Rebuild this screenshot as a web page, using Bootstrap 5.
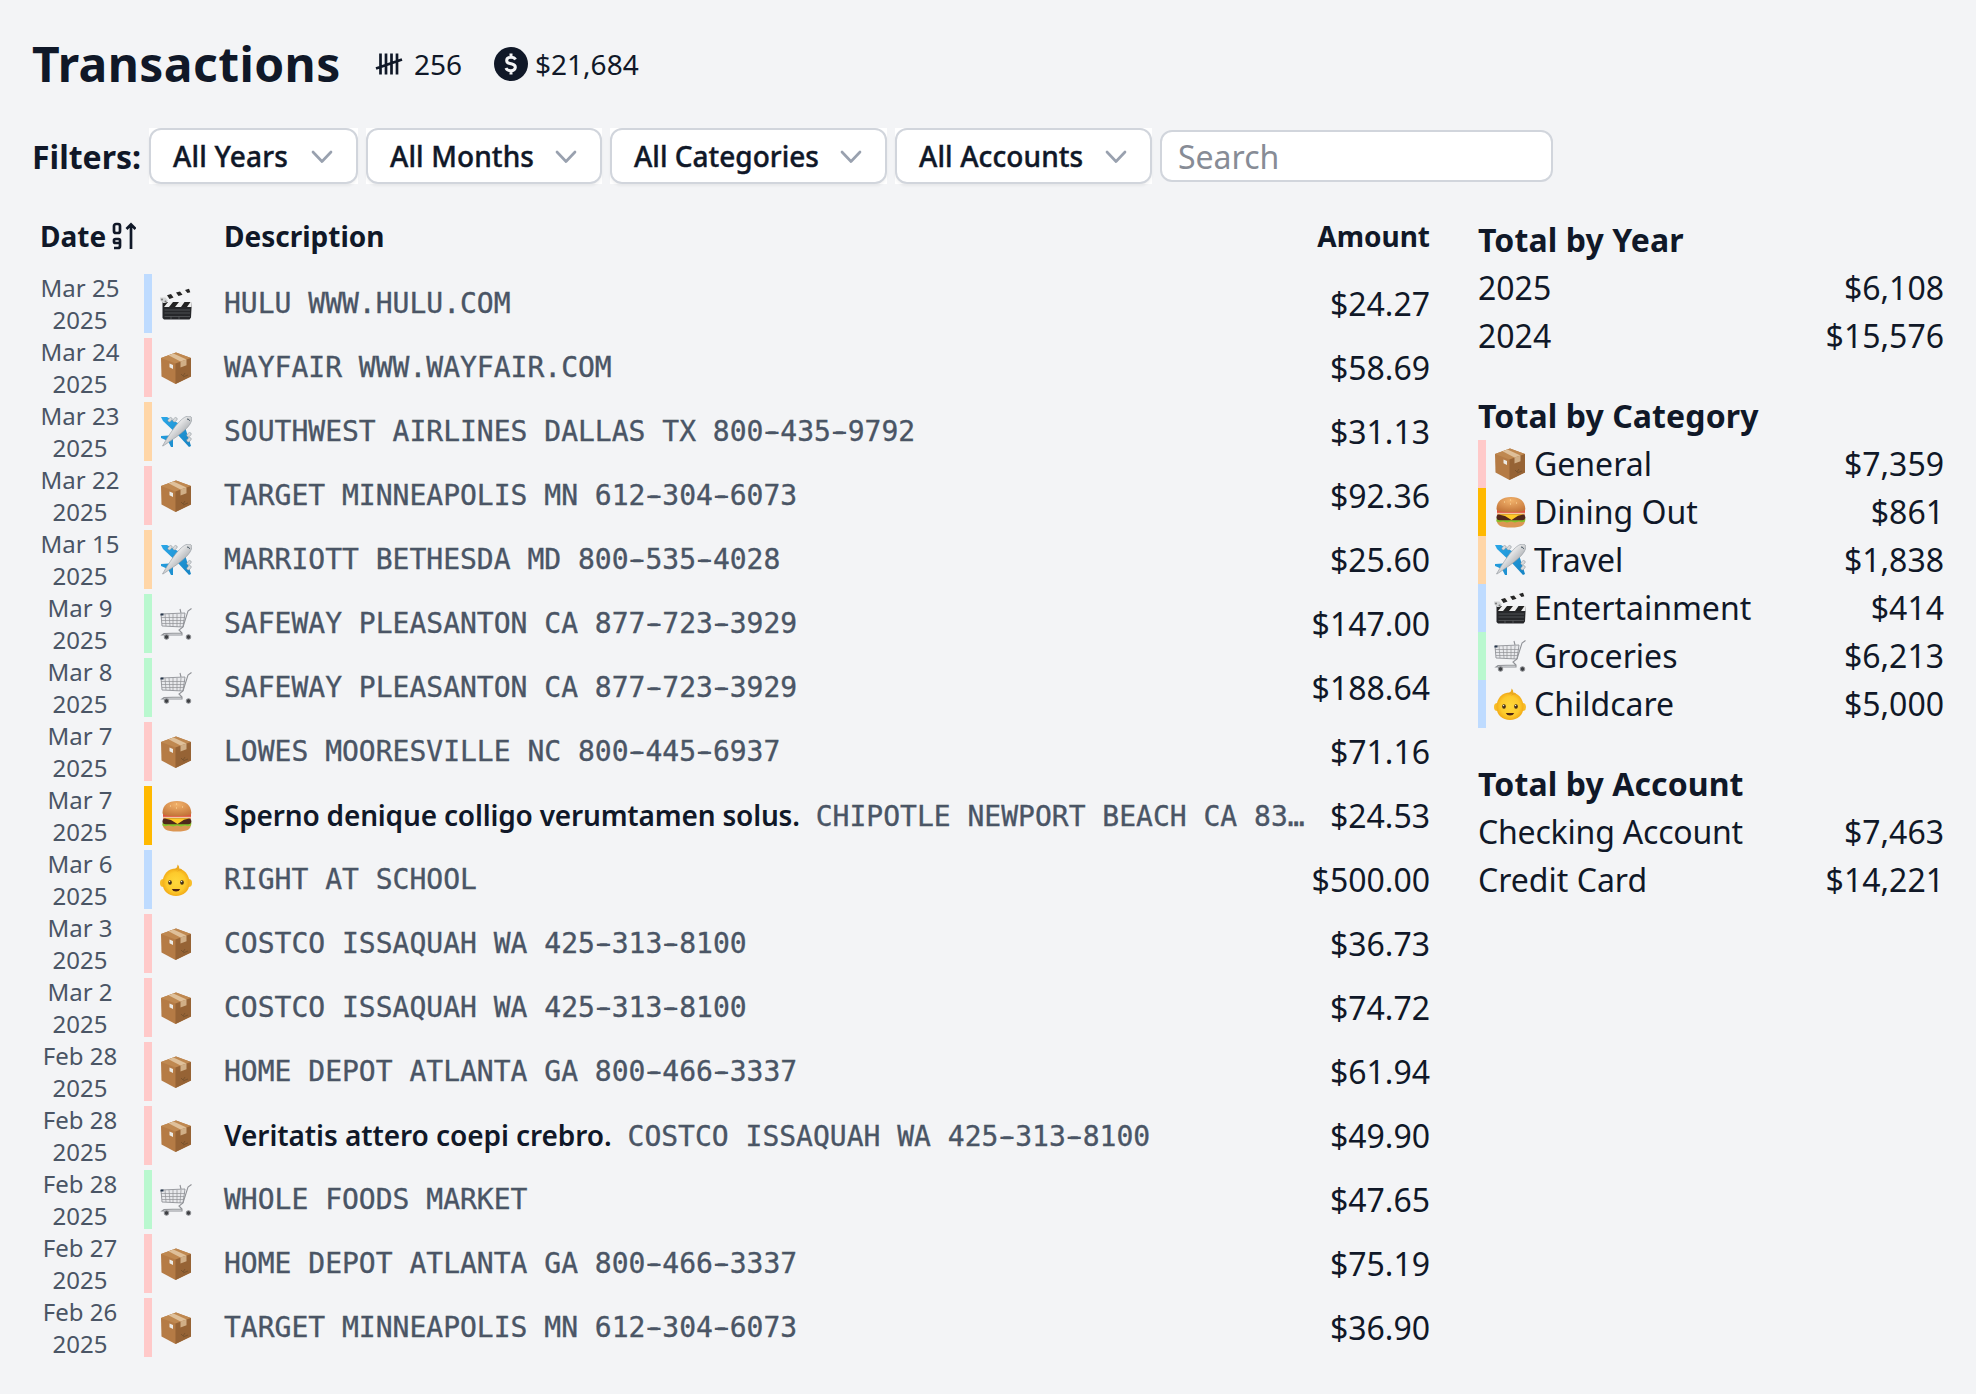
<!DOCTYPE html>
<html lang="en">
<head>
<meta charset="utf-8">
<title>Transactions</title>
<link href="https://cdn.jsdelivr.net/npm/bootstrap@5.3.0/dist/css/bootstrap.min.css" rel="stylesheet">
<style>
body{background:#f3f4f6;color:#101828;font-family:"Noto Sans","Open Sans",sans-serif;font-size:32px;line-height:48px;min-height:1394px}
.page{padding:32px}
.title{font-size:48px;line-height:64px;font-weight:700;margin:0;width:309px;white-space:nowrap;letter-spacing:.4px}
.stat{font-size:28px;line-height:40px}
.stat-count{margin-left:34px;gap:11px}
.stat-sum{margin-left:32px;gap:7px}
.head{height:64px}
.filters{height:56px;margin-top:32px;gap:8px}
.filters-label{font-size:32px;font-weight:700;width:109px;white-space:nowrap;margin-top:1px}
.pick-wrap{background:#fff;height:56px}
.pick{background:#fff;border:2px solid #d1d5dc;border-radius:12px;height:56px;font-size:28px;font-weight:500;padding:0 22px;color:#101828;display:flex;align-items:center;justify-content:space-between;box-shadow:0 2px 3px rgba(0,0,0,.05);white-space:nowrap;-webkit-text-stroke:.4px #101828}
.pick-y{width:209px;letter-spacing:.2px}.pick-m{width:236px;letter-spacing:.1px}.pick-c{width:277px}.pick-a{width:257px;letter-spacing:.1px}
.find{width:393px;height:52px;border:2px solid #d1d5dc;border-radius:12px;font-size:32px;padding:0 16px;color:#101828;background:#fff}
.find::placeholder{color:#878c96;opacity:1}
.main-area{margin-top:32px;gap:48px}
.ledger{width:1398px}
.ledger-head{height:40px;margin-bottom:15px;font-size:28px;line-height:40px;font-weight:700}
.c-date{width:112px;padding-left:8px;white-space:nowrap;margin-right:80px}
.c-desc{width:1085px}
.c-amt{width:121px;white-space:nowrap}
.entry{height:64px;padding-top:2px}
.when{width:96px;font-size:24px;line-height:32px;color:#4a5565;text-align:center;margin-right:16px;flex:none}
.bar{width:8px;height:59px;margin-top:1px;flex:none;align-self:flex-start}
.pic{width:32px;height:32px;display:block;flex:none}
.entry .pic{margin:0 32px 0 8px}
.desc{width:1085px;white-space:nowrap;font:28px/40px "DejaVu Sans Mono",monospace;color:#4a5565;-webkit-text-stroke:.35px #4a5565}
.dash{text-shadow:3px 0 currentColor,-3px 0 currentColor}
.note{font:600 28px/40px "Noto Sans",sans-serif;color:#101828;margin-right:16px;letter-spacing:-.18px;-webkit-text-stroke:0}
.note-short{letter-spacing:-.08px}
.amt{flex:1;text-align:right;white-space:nowrap}
.red{background:#ffc9c9}.amber{background:#ffb900}.orange{background:#ffd6a7}.blue{background:#bedbff}.green{background:#b9f8cf}
.totals{width:466px}
.totals section{margin-bottom:32px}
.totals h2{font-size:32px;line-height:48px;font-weight:700;margin:0;letter-spacing:.1px}
.tot{height:48px;white-space:nowrap}
.stripe{width:8px;height:48px;margin-right:8px}
.tot .pic{margin-right:8px}
.snug{letter-spacing:-.2px}
</style>
<script src="https://cdn.jsdelivr.net/npm/bootstrap@5.3.0/dist/js/bootstrap.bundle.min.js"></script>
</head>
<body>
<svg width="0" height="0" class="position-absolute" aria-hidden="true">
<defs>
<radialGradient id="bun" cx=".5" cy=".25" r=".75"><stop stop-color="#f2b26b"/><stop offset="1" stop-color="#c4763a"/></radialGradient>
<linearGradient id="wing" x2="1" y2="1"><stop stop-color="#2aa7e8"/><stop offset="1" stop-color="#1684c4"/></linearGradient>
<linearGradient id="hull" x1=".3" y1=".3" x2=".7" y2=".7"><stop stop-color="#fafafa"/><stop offset="1" stop-color="#a9acb0"/></linearGradient>
<radialGradient id="face"><stop stop-color="#ffd83b"/><stop offset=".7" stop-color="#fdca2c"/><stop offset="1" stop-color="#f3ad18"/></radialGradient>
<symbol id="i-box" viewBox="0 0 32 32"><path d="M1 6 16 .5 31 6v18.500L15.500 32 1.500 24.500z" fill="#b57b45"/><path d="M1 6 15.500 11.500 31 6 16 .5z" fill="#bf8850"/><path d="M15.500 11.500 31 6v18.500L15.500 32z" fill="#966335"/><path d="m8.500 3.300 12 6.300 6-2L13.500 1.500z" fill="#dfc09a"/><path d="m20.500 9.600 6-2v5.600l-6 2.300z" fill="#d0ae86"/><path d="m9.500 11.500 3.500 1.400v4L9.500 15.300z" fill="#eceae5"/><path d="m21 22 2 2 2-3m-2 4 5-2" stroke="#74502c" stroke-width=".8" fill="none"/></symbol>
<symbol id="i-clap" viewBox="0 0 32 32"><path d="M2.500 14H32l-.5 6-.5 9.500-1.500 2H4L2.500 30z" fill="#26272a"/><path d="M3 14h29l-.5 5H3z" fill="#eee"/><path d="M13 14h6l-4 5H9zm11.500 0h6l-3.500 5h-6zM3 14h5l-4 5H3z" fill="#222"/><path d="M0 9.500 29.500.5l.8 3.700L2 13.500z" fill="#f2f2f2"/><path d="m7 7.300 4-1.200 2.500 3.500-4 1.300zm9-2.700 4-1.200 2.500 3.300-4 1.300zM25 1.900 29 .7l1.300 3.500-2.800.9z" fill="#252525"/><path d="M0 9.500h5.500l2.500 3-2 2.500H3l-3-3z" fill="#d3d5d6"/><path d="M4.500 22H30M4.500 25H30M4.500 28.500H30m-19 0V31m8-2.500V31" stroke="#5e6264" stroke-width=".7" fill="none"/><circle cx="2" cy="11.500" r="1" fill="#777"/><circle cx="5.500" cy="13.500" r="1" fill="#777"/></symbol>
<symbol id="i-plane" viewBox="0 0 32 32"><path d="M1 1h6l18 10 6 19-2 1L18 19 3 5zM1 20l8-.5 4 4L13 31h-2l-3-6-7-3z" fill="url(#wing)"/><g fill="#d8dbdd" stroke="#818b92" stroke-width=".5"><rect x="9" y="1" width="3" height="5" rx="1.500" transform="rotate(45 10 3)"/><rect x="14" y="1" width="3" height="5" rx="1.500" transform="rotate(45 15 3)"/><rect x="28" y="16" width="3" height="5" rx="1.500" transform="rotate(45 29 18)"/><rect x="28" y="21" width="3" height="5" rx="1.500" transform="rotate(45 29 23)"/></g><path d="M2.500 30C10 17 20 2 27 .3c4-.8 5.500 1.200 4.500 4.700C29 13 15 22 3 30z" fill="url(#hull)" stroke="#8e969c" stroke-width=".6"/><path d="M27 3c2 .2 2.500 1 2.500 2" stroke="#41525e" fill="none"/></symbol>
<symbol id="i-cart" viewBox="0 0 32 32"><g fill="none" stroke="#909297"><path d="m1 6 24-1-2 14-21-1z" fill="#e8e9ec" stroke-width=".9"/><path d="M1 9.500h24M1.500 12.500h23M2 15.500h22M5 6l1 12M9 6l1 12M13 6v13M17 6v13M21 6l-1 13" stroke-width=".7"/><path d="M31.500.5 28 3l-5 16-4 3 3 3v2H2l2-1.500 18-.5M20 1l1 4" stroke-width="1.100"/></g><path d="M.5 5.500h3v2h-3z" fill="#26364b"/><g fill="#3e4044" stroke="#909296"><circle cx="6.500" cy="29" r="2.300"/><circle cx="28.500" cy="29" r="2.300"/></g></symbol>
<symbol id="i-burger" viewBox="0 0 32 32"><path d="M2.500 24h28.500c0 5-3 7.500-14 7.500S3 29 2.500 24z" fill="#dc9653"/><path d="M3 14h28v5H3z" fill="#e0523f"/><path d="M3 16.800h28v1.800H3z" fill="#f0c8a0"/><path d="M2.500 22.500 6 21.500h22l3.500 1-.5 3-3 .7-3-.6-4 1-4-1-4 1-4-1-4 .6-2.500-.7z" fill="#86c22c"/><rect x="2.500" y="18.300" width="28.800" height="6" rx="3" fill="#50271b"/><path d="M4 18.200h26l-6 1.500-6.500 4.300-6.500-4z" fill="#ffc928"/><path d="M2.500 13C2.500 5 8 1 17 1s14 4 14.300 12c0 2.500-5 3-14.300 3S2.500 15.500 2.500 13z" fill="url(#bun)"/><path d="M10 6h1m5-2h1m5 3h1m-7 1h1" stroke="#ffdca0"/></symbol>
<symbol id="i-baby" viewBox="0 0 32 32"><ellipse cx="3.300" cy="19" rx="3.300" ry="4" fill="#f8bd28"/><ellipse cx="28.700" cy="19" rx="3.300" ry="4" fill="#f8bd28"/><path d="M16 4.500c8 0 13.500 6 13.500 14.500 0 8-6 13-13.500 13S2.500 27 2.500 19C2.500 10.500 8 4.500 16 4.500z" fill="url(#face)"/><path d="M12.500 5.500c4-.2 5-2.500 5-5 1.500 1.200 2 2.500 1.500 4 2-.3 3 .7 3.500 2.200-2.500-.7-4.500 1-6 1 1-.7 1.500-1.500 1.500-2-1.500.8-3.500.8-5.500-.2z" fill="#eba91f"/><g fill="#443018"><ellipse cx="10" cy="18.500" rx="1.800" ry="2.200"/><ellipse cx="22" cy="18.500" rx="1.800" ry="2.200"/></g><circle cx="9.600" cy="17.600" r=".7" fill="#fff"/><circle cx="21.600" cy="17.600" r=".7" fill="#fff"/><path d="M11.800 25h8.400q-1 2.500-4.200 2.500t-4.200-2.500z" fill="#4d2312"/></symbol>
<symbol id="i-down" viewBox="0 0 24 24"><path d="m3 8 9 9.500L21 8" fill="none" stroke="#99a1af" stroke-width="2.700" stroke-linecap="round" stroke-linejoin="round"/></symbol>
</defs>
</svg>
<div class="page">
<header class="head d-flex align-items-center">
<h1 class="title">Transactions</h1>
<div class="stat stat-count d-flex align-items-center"><svg width="28" height="28" viewBox="0 0 28 28" fill="none" stroke="#101828" stroke-width="2.700"><path d="M5.500 3.500v21M11 3.500v21M16.500 3.500v21M22 3.500v21M1 18.500 27 9.500"/></svg><span>256</span></div>
<div class="stat stat-sum d-flex align-items-center"><svg width="34" height="34" viewBox="0 0 34 34"><circle cx="17" cy="17" r="17" fill="#101828"/><path d="M21.500 12.500c-.8-1.500-2.200-2.200-4.500-2.200-5.200 0-5.800 5.200-1 6.200l2 .5c5 1.200 4 6.700-1 6.700-2.700 0-4.300-.9-5-2.700M17 6.500v4m0 13v4" fill="none" stroke="#f3f4f6" stroke-width="3"/></svg><span>$21,684</span></div>
</header>
<div class="filters d-flex align-items-center">
<span class="filters-label">Filters:</span>
<div class="pick-wrap"><button class="pick pick-y" type="button">All Years<svg width="24" height="24"><use href="#i-down"/></svg></button></div>
<div class="pick-wrap"><button class="pick pick-m" type="button">All Months<svg width="24" height="24"><use href="#i-down"/></svg></button></div>
<div class="pick-wrap"><button class="pick pick-c" type="button">All Categories<svg width="24" height="24"><use href="#i-down"/></svg></button></div>
<div class="pick-wrap"><button class="pick pick-a" type="button">All Accounts<svg width="24" height="24"><use href="#i-down"/></svg></button></div>
<input class="find" placeholder="Search" aria-label="Search">
</div>
<main class="main-area d-flex">
<div class="ledger">
<div class="ledger-head d-flex">
<div class="c-date d-flex align-items-center">Date<svg width="26" height="28" viewBox="0 0 26 28" fill="none" stroke="#101828" stroke-width="2.700" class="ms-1 flex-shrink-0"><rect x="4" y="2" width="6" height="9" rx="2"/><path d="M10 21H5.500Q4 21 4 19.500v-1Q4 17 5.500 17h3q1.500 0 1.500 1.500V24q0 2-2 2H4M21 27V3m-4.500 4L21 2.500 25.500 7"/></svg></div>
<div class="c-desc">Description</div>
<div class="c-amt text-end">Amount</div>
</div>
<div id="entries"></div>
</div>
<aside class="totals">
<section><h2>Total by Year</h2><div class="tot d-flex justify-content-between"><span>2025</span><span>$6,108</span></div><div class="tot d-flex justify-content-between"><span>2024</span><span>$15,576</span></div></section>
<section><h2>Total by Category</h2><div id="cats"></div></section>
<section><h2>Total by Account</h2><div class="tot d-flex justify-content-between"><span class="snug">Checking Account</span><span>$7,463</span></div><div class="tot d-flex justify-content-between"><span>Credit Card</span><span>$14,221</span></div></section>
</aside>
</main>
</div>
<script>
const kinds={box:'red',clap:'blue',plane:'orange',cart:'green',burger:'amber',baby:'blue'};
const pic=k=>`<svg class="pic"><use href="#i-${k}"/></svg>`;
const dashes=t=>t.replace(/-/g,'<span class="dash">-</span>');
const rows=[
['Mar 25','clap','HULU WWW.HULU.COM','24.27'],
['Mar 24','box','WAYFAIR WWW.WAYFAIR.COM','58.69'],
['Mar 23','plane','SOUTHWEST AIRLINES DALLAS TX 800-435-9792','31.13'],
['Mar 22','box','TARGET MINNEAPOLIS MN 612-304-6073','92.36'],
['Mar 15','plane','MARRIOTT BETHESDA MD 800-535-4028','25.60'],
['Mar 9','cart','SAFEWAY PLEASANTON CA 877-723-3929','147.00'],
['Mar 8','cart','SAFEWAY PLEASANTON CA 877-723-3929','188.64'],
['Mar 7','box','LOWES MOORESVILLE NC 800-445-6937','71.16'],
['Mar 7','burger','CHIPOTLE NEWPORT BEACH CA 83…','24.53','Sperno denique colligo verumtamen solus.'],
['Mar 6','baby','RIGHT AT SCHOOL','500.00'],
['Mar 3','box','COSTCO ISSAQUAH WA 425-313-8100','36.73'],
['Mar 2','box','COSTCO ISSAQUAH WA 425-313-8100','74.72'],
['Feb 28','box','HOME DEPOT ATLANTA GA 800-466-3337','61.94'],
['Feb 28','box','COSTCO ISSAQUAH WA 425-313-8100','49.90','Veritatis attero coepi crebro.'],
['Feb 28','cart','WHOLE FOODS MARKET','47.65'],
['Feb 27','box','HOME DEPOT ATLANTA GA 800-466-3337','75.19'],
['Feb 26','box','TARGET MINNEAPOLIS MN 612-304-6073','36.90']];
document.getElementById('entries').innerHTML=rows.map(([d,k,t,a,n])=>`<div class="entry d-flex align-items-center"><div class="when">${d}<br>2025</div><div class="bar ${kinds[k]}"></div>${pic(k)}<div class="desc">${n?`<span class="note ${n.length<35?'note-short':''}">${n}</span>`:''}${dashes(t)}</div><div class="amt">$${a}</div></div>`).join('');
document.getElementById('cats').innerHTML=[['box','General','7,359'],['burger','Dining Out','861'],['plane','Travel','1,838'],['clap','Entertainment','414'],['cart','Groceries','6,213'],['baby','Childcare','5,000']].map(([k,n,a])=>`<div class="tot d-flex align-items-center"><div class="stripe ${kinds[k]}"></div>${pic(k)}<span>${n}</span><span class="ms-auto">$${a}</span></div>`).join('');
</script>
</body>
</html>
